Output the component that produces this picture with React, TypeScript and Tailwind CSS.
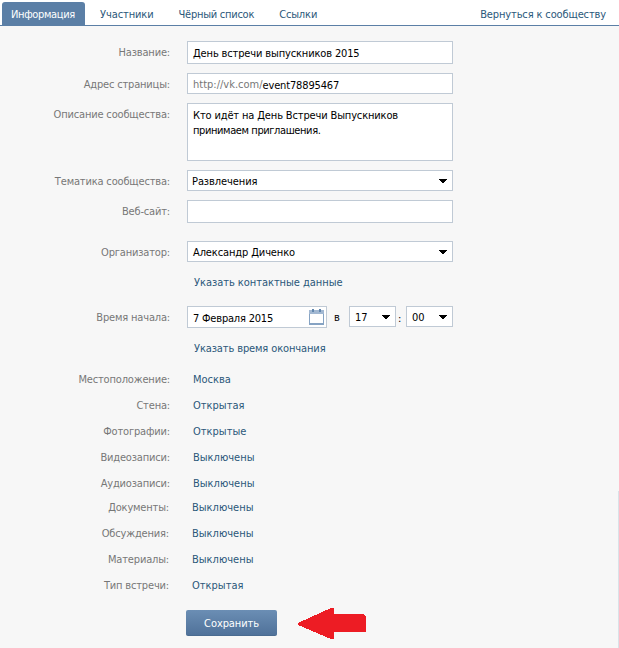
import { ReactNode } from 'react';
import clsx from 'clsx';

interface RowProps {
  label: string;
  className?: string;
  labelClassName?: string;
  children: ReactNode;
}

const Row = ({ label, className, labelClassName, children }: RowProps) => (
  <div className={clsx('flex', className)}>
    <div className={clsx('w-[170px] shrink-0 text-right tracking-[-0.17px] text-[#777777]', labelClassName)}>
      {label}
    </div>
    {children}
  </div>
);

const Caret = () => (
  <svg className="mt-px shrink-0" width="8" height="4" viewBox="0 0 8 4" shapeRendering="crispEdges">
    <path d="M0 0h8v1H0zM1 1h6v1H1zM2 2h4v1H2zM3 3h2v1H3z" fill="#000" />
  </svg>
);

const Select = ({ value, className }: { value: string; className?: string }) => (
  <div
    className={clsx(
      'flex h-[21px] items-center justify-between border border-[#c0cad5] bg-white pr-[5px] leading-[14px] text-black',
      className,
    )}
  >
    <span className="pt-[2px]">{value}</span>
    <Caret />
  </div>
);

const CalendarIcon = () => (
  <svg width="15" height="16" viewBox="0 0 15 16" shapeRendering="crispEdges">
    <rect x="0" y="1" width="15" height="15" fill="#86a3c3" />
    <rect x="1" y="5" width="13" height="9" fill="#fff" />
    <rect x="0" y="1" width="15" height="4" fill="#a2b8d2" />
    <path d="M3 0h2v3H3zM10 0h2v3h-2z" fill="#6287ae" />
  </svg>
);

const tabs = [
  { label: 'Участники', className: 'ml-[15px] tracking-[-0.1px]' },
  { label: 'Чёрный список', className: 'ml-[25px] tracking-[-0.25px]' },
  { label: 'Ссылки', className: 'ml-[25px] tracking-[-0.15px]' },
];

const settings = [
  { label: 'Местоположение:', value: 'Москва' },
  { label: 'Стена:', value: 'Открытая' },
  { label: 'Фотографии:', value: 'Открытые' },
  { label: 'Видеозаписи:', value: 'Выключены' },
  { label: 'Аудиозаписи:', value: 'Выключены' },
];

const moreSettings = [
  { label: 'Документы:', value: 'Выключены' },
  { label: 'Обсуждения:', value: 'Выключены' },
  { label: 'Материалы:', value: 'Выключены' },
  { label: 'Тип встречи:', value: 'Открытая' },
];

const App = () => (
  <div className="relative h-[648px] w-[619px] overflow-hidden bg-[#f7f7f7] font-['DejaVu_Sans_Condensed','DejaVu_Sans',sans-serif] text-[11px] leading-[16px] whitespace-nowrap [font-stretch:condensed]">
    <nav className="flex h-[26px] border-b border-[#5b7fa6] bg-white pt-[2px] pl-[2px] text-[#2b587a]">
      <div className="h-[23px] w-[83px] rounded-t-[3px] bg-[#5b7fa6] pt-[5px] pl-[9px] tracking-[-0.35px] text-white">
        Информация
      </div>
      {tabs.map((tab) => (
        <div key={tab.label} className={clsx('pt-[5px]', tab.className)}>
          {tab.label}
        </div>
      ))}
      <div className="mr-[13px] ml-auto pt-[5px] tracking-[-0.13px]">Вернуться к сообществу</div>
    </nav>

    <main className="flex flex-col pt-[15px]">
      <Row label="Название:" labelClassName="pt-[4px]">
        <div className="ml-[17px] h-[23px] w-[266px] border border-[#c0cad5] bg-white pt-[4px] pl-[5px] tracking-[-0.14px] text-black">
          День встречи выпускников 2015
        </div>
      </Row>
      <Row label="Адрес страницы:" className="mt-[9px]" labelClassName="pt-[4px]">
        <div className="ml-[17px] flex h-[21px] w-[266px] border border-[#c0cad5] bg-white pt-[3px] pl-[5px]">
          <span className="text-[#777777]">http://vk.com/</span>
          <span className="pt-px tracking-[-0.15px] text-black">event78895467</span>
        </div>
      </Row>
      <Row label="Описание сообщества:" className="mt-[9px]" labelClassName="pt-[4px]">
        <div className="ml-[17px] h-[58px] w-[266px] border border-[#c0cad5] bg-white pt-[4px] pl-[5px] leading-[15px] tracking-[-0.14px] text-black">
          Кто идёт на День Встречи Выпускников
          <br />
          <span className="tracking-[-0.4px]">принимаем приглашения.</span>
        </div>
      </Row>
      <Row label="Тематика сообщества:" className="mt-[9px]" labelClassName="pt-[4px]">
        <Select value="Развлечения" className="ml-[17px] w-[266px] pl-[4px] tracking-[-0.08px]" />
      </Row>
      <Row label="Веб-сайт:" className="mt-[9px]" labelClassName="pt-[4px]">
        <div className="ml-[17px] h-[23px] w-[266px] border border-[#c0cad5] bg-white" />
      </Row>
      <Row label="Организатор:" className="mt-[18px]" labelClassName="pt-[4px]">
        <Select value="Александр Диченко" className="ml-[17px] w-[266px] pl-[5px] tracking-[-0.12px]" />
      </Row>
      <div className="mt-[13px] pl-[194px] tracking-[-0.04px] text-[#2b587a]">Указать контактные данные</div>
      <Row label="Время начала:" className="mt-[15px] h-[22px]" labelClassName="pt-[4px]">
        <div className="ml-[17px] flex h-[22px] w-[140px] justify-between border border-[#c0cad5] bg-white pt-[2px] pr-[2px] pl-[5px] text-black">
          <span className="pt-[2px] tracking-[-0.2px]">7 Февраля 2015</span>
          <CalendarIcon />
        </div>
        <span className="w-[22px] pt-[4px] pl-[7px] text-black">в</span>
        <Select value="17" className="w-[47px] pl-[5px]" />
        <span className="w-[10px] pt-[5px] pl-[2px] text-black">:</span>
        <Select value="00" className="w-[47px] pl-[5px]" />
      </Row>
      <div className="mt-[13px] pl-[194px] tracking-[-0.12px] text-[#2b587a]">Указать время окончания</div>

      <div className="mt-[15px] flex flex-col gap-[10px]">
        {settings.map((item) => (
          <Row key={item.label} label={item.label}>
            <span className="ml-[23px] text-[#2b587a]">{item.value}</span>
          </Row>
        ))}
      </div>
      <div className="mt-[8px] -ml-px flex flex-col gap-[10px]">
        {moreSettings.map((item) => (
          <Row key={item.label} label={item.label}>
            <span className="ml-[23px] text-[#2b587a]">{item.value}</span>
          </Row>
        ))}
      </div>

      <div className="mt-[14px] flex pl-[186px]">
        <button className="mt-[2px] h-[26px] w-[91px] rounded-[2px] border-b border-[#4a6b90] bg-linear-to-b from-[#6b8eb4] to-[#50729a] pt-[2px] tracking-[-0.1px] text-white">
          Сохранить
        </button>
        <svg className="ml-[21px]" width="68" height="31" viewBox="0 0 68 31" shapeRendering="crispEdges">
          <path d="M0 15L33 0h3v6h29l3 2v16H36v7h-3L0 17z" fill="#ed1c24" />
        </svg>
      </div>
    </main>

    <div className="absolute right-0 bottom-0 h-[157px] w-px bg-[#dae2e8]" />
  </div>
);

export default App;
